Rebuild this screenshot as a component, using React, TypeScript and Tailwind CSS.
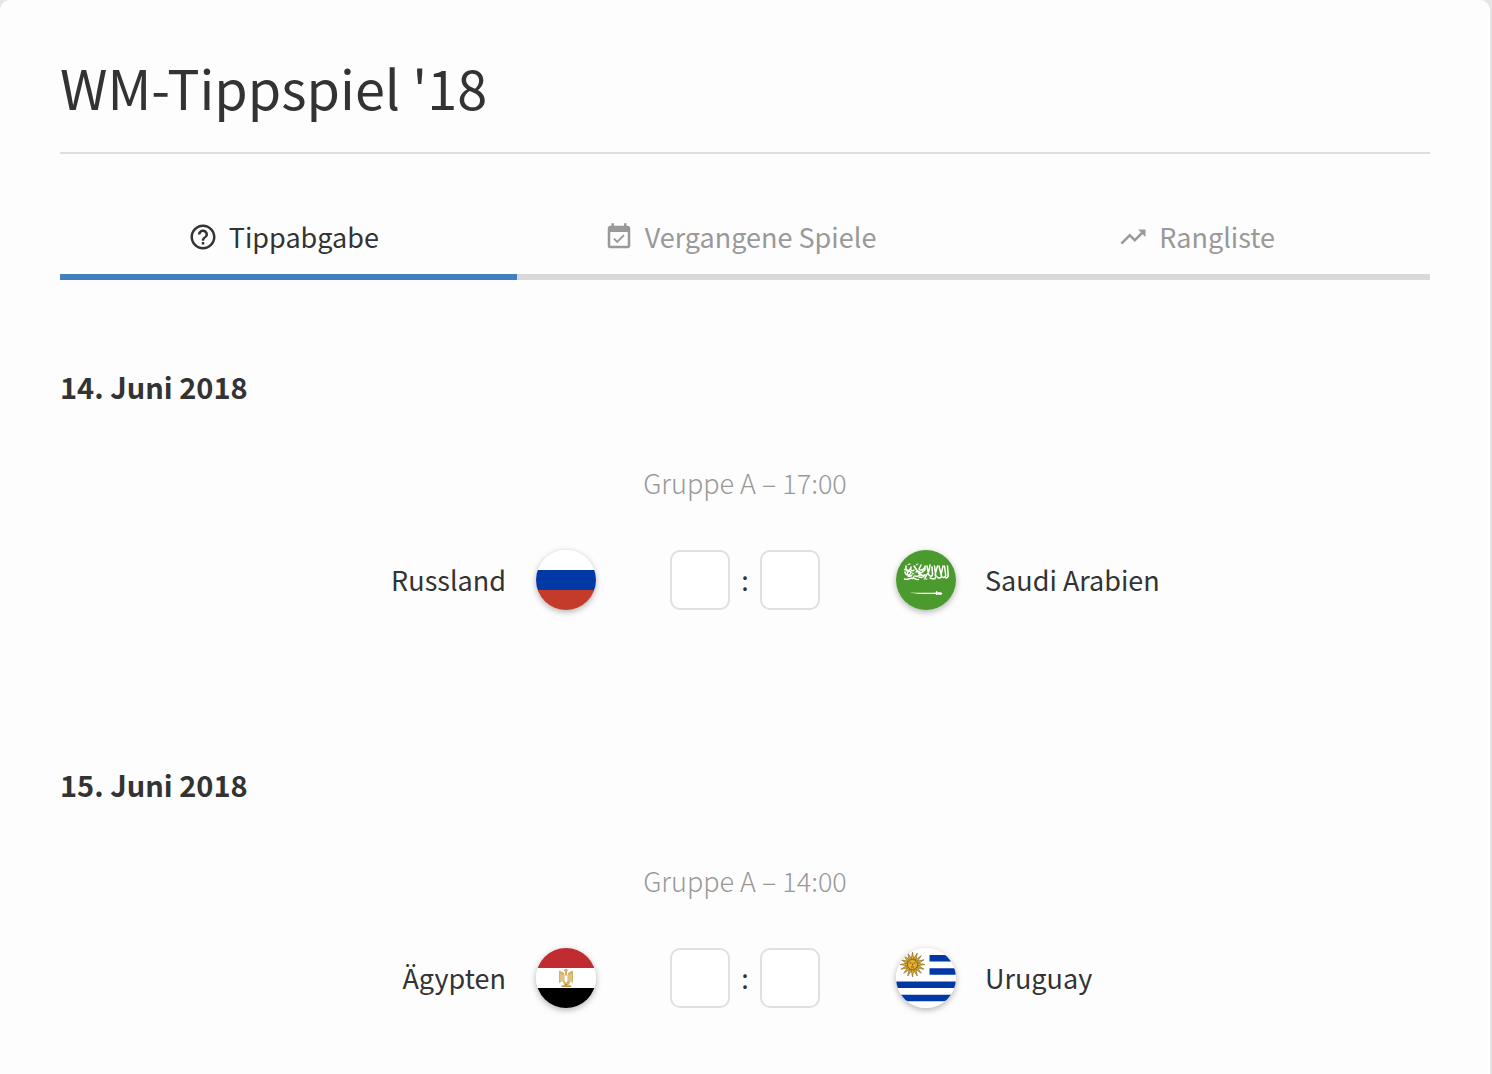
import { useState, type ReactNode } from "react";
import { MdEventAvailable, MdHelpOutline, MdTrendingUp } from "react-icons/md";

function Flag({ label, children }: { label: string; children: ReactNode }) {
  return (
    <svg
      role="img"
      aria-label={label}
      viewBox="0 0 60 60"
      className="size-[60px] shrink-0 rounded-full bg-white shadow-[0_2px_6px_rgba(0,0,0,0.3)]"
    >
      {children}
    </svg>
  );
}

function RussiaFlag() {
  return (
    <Flag label="Flagge Russland">
      <path fill="#fff" d="M0 0h60v20H0z" />
      <path fill="#0039a6" d="M0 20h60v20H0z" />
      <path fill="#c43b2c" d="M0 40h60v20H0z" />
    </Flag>
  );
}

function SaudiFlag() {
  return (
    <Flag label="Flagge Saudi-Arabien">
      <path fill="#4a9a2d" d="M0 0h60v60H0z" />
      <g fill="none" stroke="#fff" strokeLinecap="round" strokeLinejoin="round">
        <g strokeWidth="1.5">
          <path d="M8.500 29c3 1 5-1 8-1s3 2 6 1.500M9 22c0 3 3 4 5 2s0-4-2-2 1 5 4 3" />
          <path d="M10 16v4c1 2 3 1 4-1M15 17c-1 3 1 5 3 3M8.500 19.500l3 .5" />
          <path d="M18 16l4 6c2 3 5 4 7 3M19 26c2 1 4 0 5-2s-2-4-4-2" />
          <path d="M25 15l-2 4c2 2 4 1 5-1M23 27c3 1 5 0 6-2M29 16v4l-4 3" />
          <path d="M31 16l1.500 8c1 3 4 3 4 0L36 17M34 15l-1 6-4 7" />
          <path d="M38.500 16l1.500 11c-1 2-4 2-6 1M41.500 16l-2.500 9" />
          <path d="M43 16l2.500 10c0 2-3 3-4 1M47 16l-2 9M48.500 16l1.200 9c0 2-2 3-3 2" />
          <path d="M51.500 16l.7 9c0 2-1 3-2.500 3" />
        </g>
        <g strokeWidth="1">
          <path d="M12 14.500l2-.5M20 15l2-1M28 29h3M37 29h2M16 23l2 1M26 20h2M17 29l1-3M12 26.500h3" />
        </g>
      </g>
      <path fill="#fff" d="M14 42.500c6 .5 18 .2 26-.1v-1.200h1.200v1H45l1.500 1.300-1.500 1.400-4-.5v.7h-1.200v-1.200c-9 .4-20 .2-25.800-1.400z" />
    </Flag>
  );
}

function EgyptFlag() {
  return (
    <Flag label="Flagge Ägypten">
      <path fill="#c02c32" d="M0 0h60v20H0z" />
      <path fill="#fff" d="M0 20h60v20H0z" />
      <path fill="#000" d="M0 40h60v20H0z" />
      <path fill="#d3b062" d="M23 22.500l4.500 2L29 28v-4.500l-1.500-1 1.500-1.500h2l1 1.500-1 1V28l1.500-3.500 4.500-2V35l-2.500-2-2 4h2l1.500 2h-11l1.500-2h2l-2-4L23 35z" />
      <path fill="#fff" d="M28.500 27.500h3V33L30 35l-1.500-2z" />
      <path stroke="#fff" strokeWidth=".5" d="M25 26v7M27 27v6M33 27v6M35 26v7" />
      <path fill="#b98a33" d="M29 36h2v1.500h-2zM26 38.300h8v.7h-8z" />
    </Flag>
  );
}

const SUN_RAYS = Array.from({ length: 16 }, (_, i) => i * 22.5);

function UruguayFlag() {
  return (
    <Flag label="Flagge Uruguay">
      <path fill="#fff" d="M0 0h60v60H0z" />
      <path fill="#0039a6" d="M33.500 7H60v6.500H33.500zM33.500 20.300H60v6.500H33.500zM0 33.500h60V40H0zM0 46.700h60v6.600H0z" />
      <g transform="translate(16.500 16.500)">
        {SUN_RAYS.map((angle) => (
          <path
            key={angle}
            transform={`rotate(${angle})`}
            d="M-1.500 -5L0 -12.500 1.500 -5z"
            fill="#d9a62a"
            stroke="#6e5a22"
            strokeWidth=".5"
          />
        ))}
        <circle r="5" fill="#e3b02f" stroke="#7b6222" strokeWidth=".8" />
        <path fill="none" stroke="#6e5216" strokeWidth=".8" d="M-3 -1.500h2M1 -1.500h2M0 -1v2M-1.500 2.500h3" />
      </g>
    </Flag>
  );
}

const TABS = [
  { label: "Tippabgabe", Icon: MdHelpOutline },
  { label: "Vergangene Spiele", Icon: MdEventAvailable },
  { label: "Rangliste", Icon: MdTrendingUp },
];

const MATCHES = [
  { date: "14. Juni 2018", info: "Gruppe A – 17:00", home: "Russland", HomeFlag: RussiaFlag, away: "Saudi Arabien", AwayFlag: SaudiFlag },
  { date: "15. Juni 2018", info: "Gruppe A – 14:00", home: "Ägypten", HomeFlag: EgyptFlag, away: "Uruguay", AwayFlag: UruguayFlag },
];

function ScoreInput({ team }: { team: string }) {
  return (
    <input
      type="text"
      inputMode="numeric"
      aria-label={`Tore ${team}`}
      className="size-[60px] rounded-[10px] border-2 border-[#e0e0e0] bg-white text-center"
    />
  );
}

export default function App() {
  const [active, setActive] = useState(0);

  return (
    <div className="min-h-screen bg-[#e6e6e6] pr-0.5 font-['Noto_Sans_CJK_SC','Noto_Sans',sans-serif] text-[27px] leading-10 text-[#333]">
      <main className="min-h-screen rounded-t-[10px] bg-[#fdfdfd] px-[60px] pt-[57px] pb-[60px]">
        <h1 className="border-b-2 border-[#dfdfdf] pb-[35px] text-[54px] leading-[60px]">WM-Tippspiel '18</h1>

        <div role="tablist" className="mt-[60px] grid grid-cols-3">
          {TABS.map(({ label, Icon }, i) => (
            <button
              key={label}
              type="button"
              role="tab"
              aria-selected={active === i}
              onClick={() => setActive(i)}
              className={`flex items-center justify-center gap-[11px] border-b-6 pt-[3px] pr-2.5 pb-[17px] ${
                active === i ? "border-[#427fbe] text-[#333]" : "border-[#d9d9d9] text-[#999]"
              }`}
            >
              <Icon className="size-[30px]" aria-hidden="true" />
              {label}
            </button>
          ))}
        </div>

        <div className="flex flex-col gap-[154px] pt-[86px]">
          {MATCHES.map(({ date, info, home, HomeFlag, away, AwayFlag }) => (
            <section key={date}>
              <h2 className="text-[29px] font-bold">{date}</h2>
              <p className="mt-[57px] text-center font-light text-[#999]">{info}</p>
              <div className="mt-[47px] grid grid-cols-[1fr_auto_1fr] items-center pl-0.5">
                <div className="flex items-center justify-end gap-[30px]">
                  <span>{home}</span>
                  <HomeFlag />
                </div>
                <div className="flex items-center pr-[76px] pl-[74px]">
                  <ScoreInput team={home} />
                  <span className="w-[30px] text-center">:</span>
                  <ScoreInput team={away} />
                </div>
                <div className="flex items-center gap-[29px]">
                  <AwayFlag />
                  <span>{away}</span>
                </div>
              </div>
            </section>
          ))}
        </div>
      </main>
    </div>
  );
}
